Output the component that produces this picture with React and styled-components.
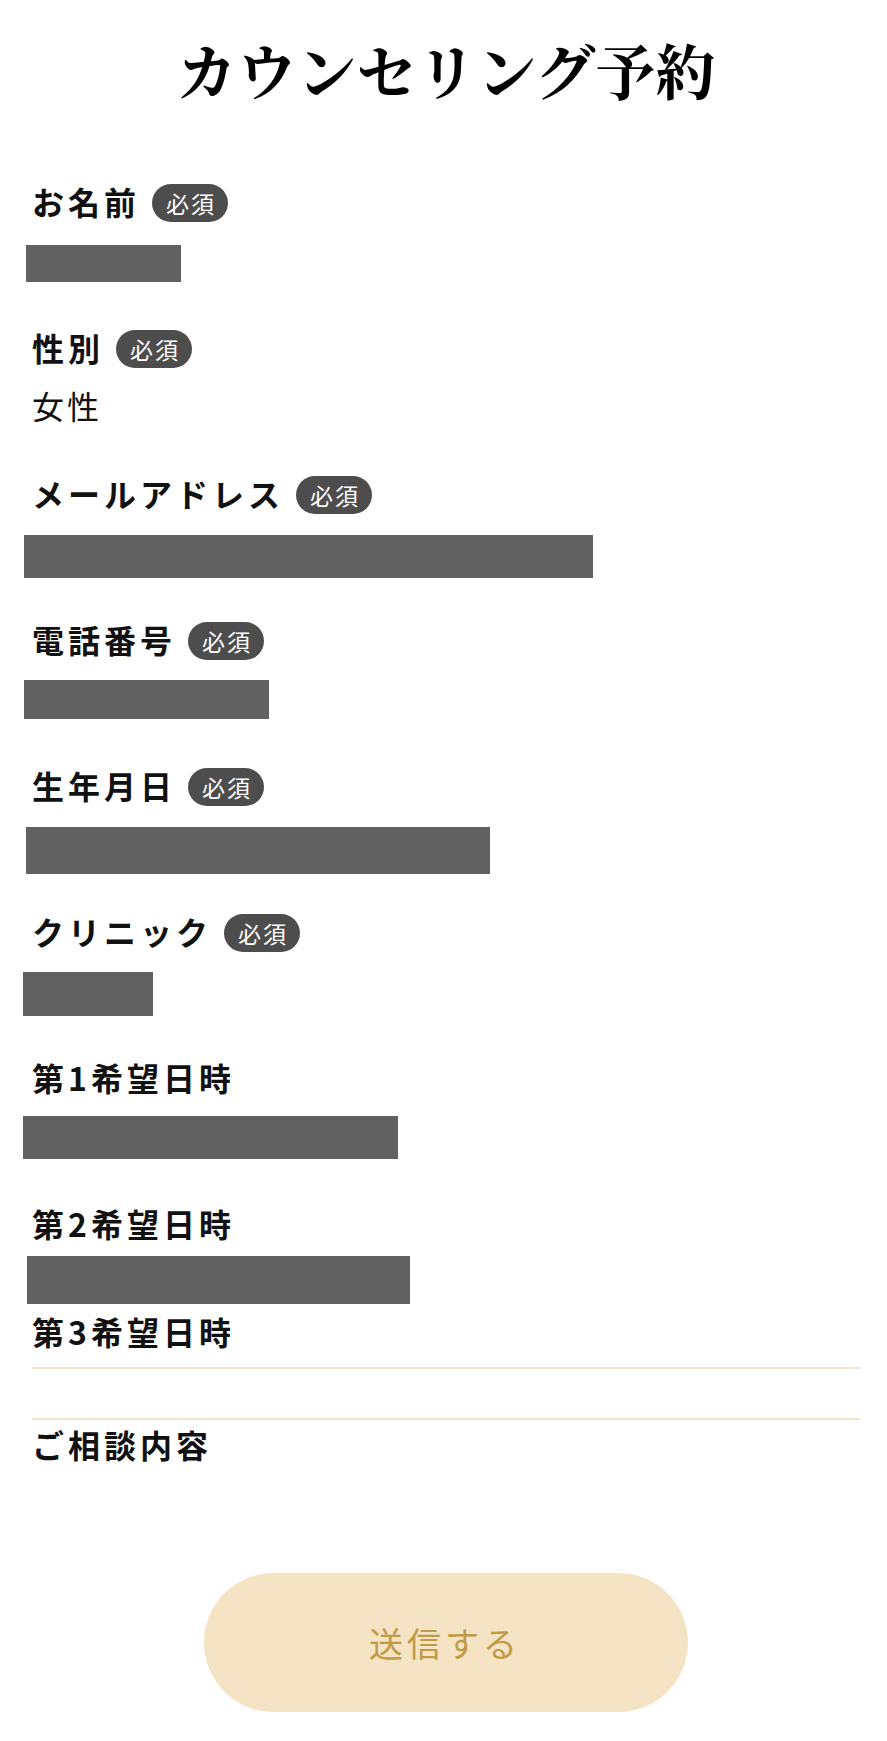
import React from "react";
import styled, { createGlobalStyle } from "styled-components";

const GlobalStyle = createGlobalStyle`
  html, body {
    margin: 0;
    padding: 0;
    background: #fff;
  }
  body {
    font-family: "Noto Sans CJK JP", "Noto Sans", sans-serif;
    color: #111;
  }
`;

const Page = styled.div`
  box-sizing: border-box;
  width: 887px;
  padding: 31px 27px 0 32px;
`;

const Title = styled.h1`
  margin: 0 0 70px;
  font-family: "Noto Serif CJK JP", "Noto Sans CJK JP", serif;
  font-size: 60px;
  line-height: 76px;
  font-weight: 700;
  text-align: center;
  color: #000;
`;

const Field = styled.div`
  margin-bottom: ${p => p.$gap ?? 40}px;
`;

const LabelRow = styled.div`
  display: flex;
  align-items: center;
  height: 48px;
  margin-bottom: ${p => p.$after ?? 10}px;
`;

const Label = styled.span`
  font-size: 32px;
  line-height: 48px;
  font-weight: 700;
  letter-spacing: 4px;
  color: #111;
`;

const Badge = styled.span`
  display: inline-flex;
  align-items: center;
  justify-content: center;
  box-sizing: border-box;
  width: 76px;
  height: 38px;
  margin: 4px 0 0 12px;
  border-radius: 19px;
  background: #4d4d4d;
  color: #fff;
  font-size: 23px;
  font-weight: 400;
  letter-spacing: 2px;
  padding-left: 2px;
`;

const Value = styled.div`
  display: flow-root;
  height: 48px;
  font-size: 32px;
  line-height: 48px;
  font-weight: 400;
  letter-spacing: 3px;
  color: #111;
`;

const Redact = styled.div`
  width: ${p => p.$w}px;
  height: ${p => p.$h}px;
  margin-left: ${p => p.$x}px;
  margin-top: ${p => p.$y}px;
  background: #616161;
`;

const EmptyInput = styled.div`
  box-sizing: border-box;
  height: 53px;
  margin-top: 12px;
  border-top: 2px solid #f4e5c9;
  border-bottom: 2px solid #f4e5c9;
`;

const ButtonRow = styled.div`
  display: flex;
  justify-content: center;
  padding-top: 105px;
`;

const Submit = styled.button`
  width: 484px;
  height: 139px;
  border: none;
  border-radius: 70px;
  background: #f4e4c3;
  color: #c19a47;
  font-family: "Noto Sans CJK JP", "Noto Sans", sans-serif;
  font-size: 34px;
  font-weight: 400;
  letter-spacing: 4px;
  padding-left: 4px;
  cursor: pointer;
`;

const fields = [
  { label: "お名前", required: true, bar: { w: 155, h: 37, x: -6, y: 10 } },
  { label: "性別", required: true, text: "女性" },
  { label: "メールアドレス", required: true, bar: { w: 569, h: 43, x: -8, y: 8 } },
  { label: "電話番号", required: true, bar: { w: 245, h: 39, x: -8, y: 7 } },
  { label: "生年月日", required: true, bar: { w: 464, h: 47, x: -6, y: 8 } },
  { label: "クリニック", required: true, bar: { w: 130, h: 44, x: -9, y: 7 } },
  { label: "第1希望日時", bar: { w: 375, h: 43, x: -9, y: 5 } },
  { label: "第2希望日時", bar: { w: 383, h: 48, x: -5, y: -1 }, gap: 2 },
];

const App = () => (
  <Page>
    <GlobalStyle />
    <Title>カウンセリング予約</Title>

    {fields.map((f, i) => (
      <Field key={i} $gap={f.gap}>
        <LabelRow>
          <Label>{f.label}</Label>
          {f.required && <Badge>必須</Badge>}
        </LabelRow>
        <Value>
          {f.text ? f.text : <Redact $w={f.bar.w} $h={f.bar.h} $x={f.bar.x} $y={f.bar.y} />}
        </Value>
      </Field>
    ))}

    <Field $gap={0}>
      <LabelRow $after={0}>
        <Label>第3希望日時</Label>
      </LabelRow>
      <EmptyInput />
    </Field>

    <Field $gap={0}>
      <LabelRow $after={0}>
        <Label>ご相談内容</Label>
      </LabelRow>
    </Field>

    <ButtonRow>
      <Submit type="button">送信する</Submit>
    </ButtonRow>
  </Page>
);

export default App;
